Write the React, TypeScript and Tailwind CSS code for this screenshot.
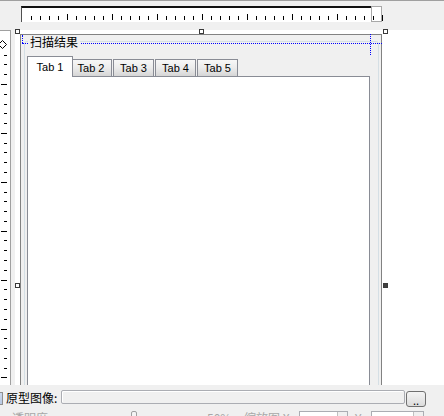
import React from "react";

const hTicks = Array.from({ length: 38 }, (_, k) => ({ x: 31 + 9 * k, major: k % 5 === 4 }));
const vTicks: { y: number; major: boolean }[] = [];
for (let k = -3; k <= 30; k++) {
  vTicks.push({ y: Math.round(84 + 9.78 * k), major: ((k % 5) + 5) % 5 === 0 });
}

function Handle({ x, y, filled }: { x: string; y: string; filled?: boolean }) {
  return (
    <div
      className={`absolute z-30 w-[5px] h-[5px] border border-[#3a3a3a] ${filled ? "bg-[#404040]" : "bg-white"} ${x} ${y}`}
    />
  );
}

function Tab({ label, cls }: { label: string; cls: string }) {
  return (
    <div
      className={`h-[17px] flex items-center justify-center border-t border-r border-[#898c95] bg-gradient-to-b from-[#f7f7f7] via-[#ebebeb] to-[#d6d6d6] text-[11px] leading-[13px] text-black ${cls}`}
    >
      {label}
    </div>
  );
}

export default function App() {
  return (
    <div
      className="relative w-[444px] h-[416px] overflow-hidden bg-white flex flex-col"
      style={{ fontFamily: '"Liberation Sans", "Noto Sans CJK SC", sans-serif' }}
    >
      {/* top ruler bar */}
      <div className="h-[30px] shrink-0 bg-[#f0f0f0] border-t border-[#a0a0a0] flex items-start pl-[21px]">
        <div className="mt-[5px] w-[350px] h-[16px] bg-white border-l border-[#505050] border-t-2 border-t-[#111]">
          <svg width="349" height="14" className="block">
            {hTicks.map((t) => (
              <rect key={t.x} x={t.x - 22} y={t.major ? 6 : 8} width={1} height={t.major ? 6 : 4} fill="#000" />
            ))}
          </svg>
        </div>
        <div className="mt-[5px] w-[11px] h-[16px] border border-[#a8a8a8] bg-white">
          <svg width="9" height="14" className="block">
            <rect x={1} y={9} width={1} height={4} fill="#000" />
          </svg>
        </div>
        <div className="mt-[14px] w-[1px] h-[6px] bg-black" />
      </div>

      {/* middle */}
      <div className="flex-1 flex min-h-0">
        <div className="w-[11px] shrink-0 border-t border-r border-[#a0a0a0] bg-white overflow-hidden">
          <svg width="10" height="354" className="block">
            <path d="M2.5 9.5 L6.5 13.5 L2.5 17.5 L-1.5 13.5 Z" fill="none" stroke="#000" strokeWidth="1" />
            {vTicks.map((t) => (
              <rect key={t.y} x={t.major ? 1 : 4} y={t.y - 31} width={t.major ? 6 : 3} height={1} fill="#000" />
            ))}
          </svg>
        </div>
        <div className="w-[4px] shrink-0 bg-[#f0f0f0]" />
        <div className="flex-1 bg-white overflow-hidden pl-[5px] pt-[4px]">
          <div className="w-[362px] h-[400px] border-t border-l border-r border-[#828282] bg-[#f0f0f0] pt-[6px] pl-[3px] pr-[2px]">
            {/* group box */}
            <div className="relative h-[420px] border border-[#d5dfe5] rounded-[3px] pl-[2px] pr-[8px] pt-[14px]">
              <div
                className="absolute left-[3px] top-[-7px] px-[2px] bg-[#f0f0f0] text-[12px] leading-[14px] text-black z-20"
                style={{ fontFamily: '"Noto Sans CJK SC", sans-serif' }}
              >
                扫描结果
              </div>
              {/* tab control */}
              <div className="flex flex-col">
                <div className="h-[20px] flex items-end">
                  <div className="relative z-10 -mb-px h-[21px] w-[46px] flex items-center justify-center border-t border-l border-r border-[#898c95] bg-white text-[11px] leading-[13px] text-black">
                    Tab 1
                  </div>
                  <Tab label="Tab 2" cls="w-[39px] pr-[2px]" />
                  <Tab label="Tab 3" cls="w-[41px] ml-px border-l" />
                  <Tab label="Tab 4" cls="w-[41px] ml-px border-l" />
                  <Tab label="Tab 5" cls="w-[41px] ml-px border-l" />
                </div>
                <div className="h-[360px] border border-[#898c95] bg-white" />
              </div>
            </div>
          </div>
        </div>
      </div>

      {/* bottom property bar */}
      <div
        className="h-[31px] shrink-0 bg-[#f0f0f0] flex flex-col text-[12px]"
        style={{ fontFamily: '"Noto Sans CJK SC", sans-serif' }}
      >
        <div className="h-[25px] pt-[5px] flex items-start shrink-0">
          <div className="-ml-[10px] mt-[2px] w-[13px] h-[13px] shrink-0 border border-[#8f8f8f] bg-gradient-to-br from-[#dde6f4] to-[#b7c8e3]" />
          <div className="ml-[3px] mt-[1px] w-[55px] leading-[14px] text-black whitespace-nowrap">原型图像:</div>
          <div className="w-[344px] h-[14px] rounded-[2px] border border-[#abadb3] bg-[#f0f0f0] shadow-[inset_1px_1px_0_#ffffff]" />
          <div className="ml-px mt-px w-[20px] h-[16px] rounded-[3px] border border-[#707070] bg-gradient-to-b from-[#f4f4f4] to-[#dcdcdc] flex items-end justify-center text-[11px] leading-[11px] text-black">
            ..
          </div>
        </div>
        <div className="flex items-start shrink-0 h-[14px] overflow-hidden text-[#a8a8a8]">
          <div className="ml-[12px] mt-[1px] w-[36px] leading-[14px] whitespace-nowrap">透明度</div>
          <div className="ml-[83px] mt-[1px] w-[6px] h-[12px] border border-[#a0a0a0] rounded-t-[2px] bg-[#f4f4f4]" />
          <div className="ml-[70px] mt-[1px] w-[37px] leading-[14px] whitespace-nowrap">50%</div>
          <div className="mt-[1px] w-[55px] leading-[14px] whitespace-nowrap">缩放图 X:</div>
          <div className="mt-[1px] w-[49px] h-[14px] border border-[#abadb3] bg-white flex justify-end">
            <div className="w-[10px] h-full border-l border-[#c0c0c0] bg-[#f0f0f0]" />
          </div>
          <div className="ml-[7px] mt-[1px] w-[16px] leading-[14px] whitespace-nowrap">Y:</div>
          <div className="mt-[1px] w-[53px] h-[14px] border border-[#abadb3] bg-white flex justify-end">
            <div className="w-[10px] h-full border-l border-[#c0c0c0] bg-[#f0f0f0]" />
          </div>
        </div>
      </div>

      {/* designer overlays: snap/padding guides */}
      <div className="absolute z-10 left-[22px] top-[43px] w-[360px] border-t border-dotted border-[#0000ff]" />
      <div className="absolute z-10 left-[22px] top-[35px] h-[8px] border-l border-dotted border-[#0000ff]" />
      <div className="absolute z-10 left-[370px] top-[34px] h-[21px] border-l border-dotted border-[#0000ff]" />

      {/* selection handles */}
      <Handle x="left-[15px]" y="top-[29px]" />
      <Handle x="left-[199px]" y="top-[29px]" />
      <Handle x="left-[383px]" y="top-[29px]" />
      <Handle x="left-[15px]" y="top-[283px]" />
      <Handle x="left-[383px]" y="top-[283px]" filled />
    </div>
  );
}
